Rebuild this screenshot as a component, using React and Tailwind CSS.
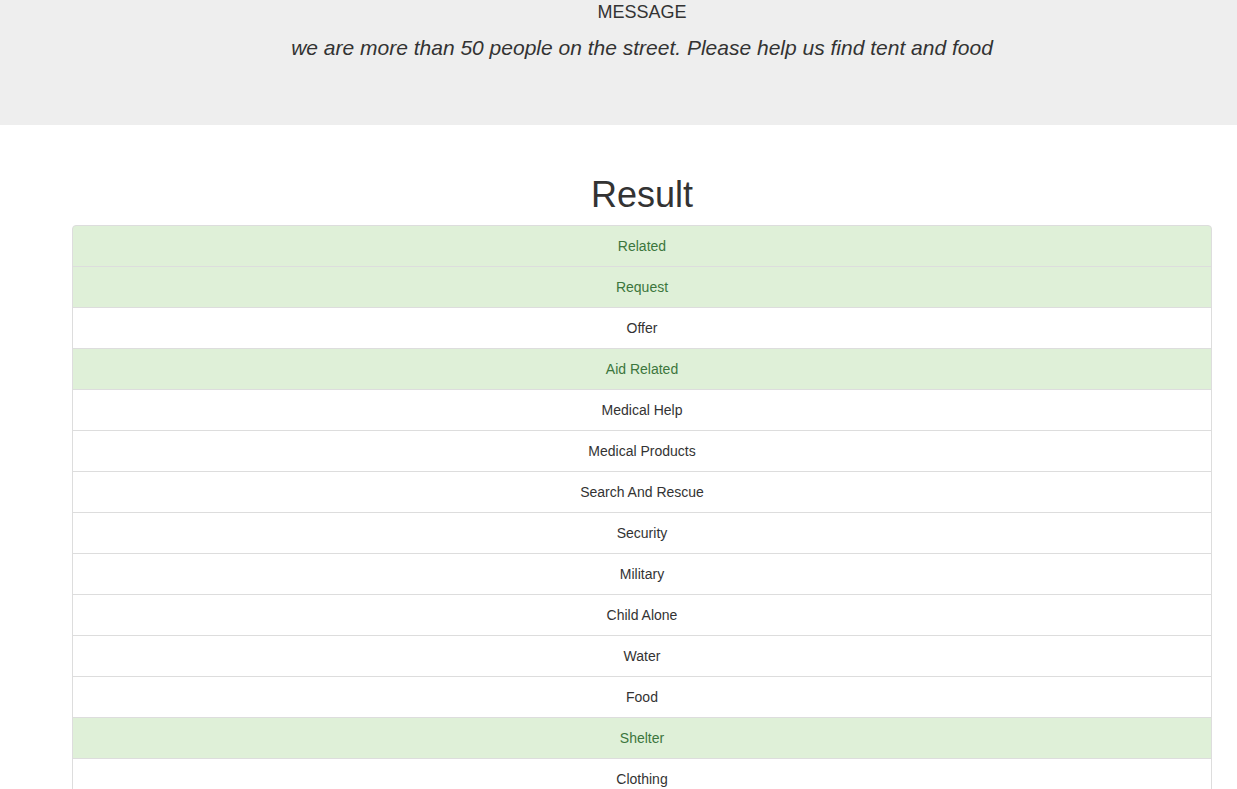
const categories = [
  { name: 'Related', on: true },
  { name: 'Request', on: true },
  { name: 'Offer', on: false },
  { name: 'Aid Related', on: true },
  { name: 'Medical Help', on: false },
  { name: 'Medical Products', on: false },
  { name: 'Search And Rescue', on: false },
  { name: 'Security', on: false },
  { name: 'Military', on: false },
  { name: 'Child Alone', on: false },
  { name: 'Water', on: false },
  { name: 'Food', on: false },
  { name: 'Shelter', on: true },
  { name: 'Clothing', on: false },
  { name: 'Money', on: false },
  { name: 'Missing People', on: false },
];

export default function App() {
  return (
    <div className="min-h-screen bg-white text-[#333] font-['Liberation_Sans',Arial,sans-serif] text-sm">
      {/* message banner */}
      <div className="bg-[#eee] h-[125px] mb-[50px]">
        <div className="ml-[72px] w-[1140px] text-center">
          <p className="text-[18px] leading-[24px]">MESSAGE</p>
          <p className="italic text-[21px] leading-[24px] mt-[12px]">
            we are more than 50 people on the street. Please help us find tent and food
          </p>
        </div>
      </div>

      {/* result */}
      <div className="ml-[72px] w-[1140px]">
        <h1 className="text-center text-[36px] leading-[40px] mb-[10px]">Result</h1>
        <ul className="mb-5">
          {categories.map((c, i) => (
            <li
              key={c.name}
              className={`text-center px-[15px] py-[10px] leading-[20px] border border-[#ddd] -mb-px ${
                i === 0 ? 'rounded-t-[4px]' : ''
              } ${c.on ? 'bg-[#dff0d8] text-[#3c763d]' : 'bg-white text-[#333]'}`}
            >
              {c.name}
            </li>
          ))}
        </ul>
      </div>
    </div>
  );
}
